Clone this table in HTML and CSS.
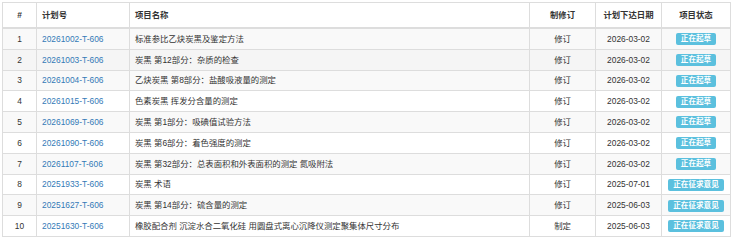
FILE: index.html
```html
<!DOCTYPE html>
<html lang="zh">
<head>
<meta charset="utf-8">
<link rel="stylesheet" href="styles.css">
</head>
<body>
<table class="plan-table">
  <colgroup>
    <col class="c-idx"><col class="c-code"><col class="c-name"><col class="c-type"><col class="c-date"><col class="c-state">
  </colgroup>
  <thead>
    <tr><th class="center">#</th><th>计划号</th><th>项目名称</th><th class="center">制修订</th><th class="center">计划下达日期</th><th class="center">项目状态</th></tr>
  </thead>
  <tbody>
    <tr><td class="center">1</td><td><a href="#">20261002-T-606</a></td><td>标准参比乙炔炭黑及鉴定方法</td><td class="center">修订</td><td class="center">2026-03-02</td><td class="center"><span class="label">正在起草</span></td></tr>
    <tr class="hover"><td class="center">2</td><td><a href="#">20261003-T-606</a></td><td>炭黑 第12部分：杂质的检查</td><td class="center">修订</td><td class="center">2026-03-02</td><td class="center"><span class="label">正在起草</span></td></tr>
    <tr><td class="center">3</td><td><a href="#">20261004-T-606</a></td><td>乙炔炭黑 第8部分：盐酸吸液量的测定</td><td class="center">修订</td><td class="center">2026-03-02</td><td class="center"><span class="label">正在起草</span></td></tr>
    <tr><td class="center">4</td><td><a href="#">20261015-T-606</a></td><td>色素炭黑 挥发分含量的测定</td><td class="center">修订</td><td class="center">2026-03-02</td><td class="center"><span class="label">正在起草</span></td></tr>
    <tr><td class="center">5</td><td><a href="#">20261069-T-606</a></td><td>炭黑 第1部分：吸碘值试验方法</td><td class="center">修订</td><td class="center">2026-03-02</td><td class="center"><span class="label">正在起草</span></td></tr>
    <tr><td class="center">6</td><td><a href="#">20261090-T-606</a></td><td>炭黑 第6部分：着色强度的测定</td><td class="center">修订</td><td class="center">2026-03-02</td><td class="center"><span class="label">正在起草</span></td></tr>
    <tr><td class="center">7</td><td><a href="#">20261107-T-606</a></td><td>炭黑 第32部分：总表面积和外表面积的测定 氮吸附法</td><td class="center">修订</td><td class="center">2026-03-02</td><td class="center"><span class="label">正在起草</span></td></tr>
    <tr><td class="center">8</td><td><a href="#">20251933-T-606</a></td><td>炭黑 术语</td><td class="center">修订</td><td class="center">2025-07-01</td><td class="center"><span class="label">正在征求意见</span></td></tr>
    <tr><td class="center">9</td><td><a href="#">20251627-T-606</a></td><td>炭黑 第14部分：硫含量的测定</td><td class="center">修订</td><td class="center">2025-06-03</td><td class="center"><span class="label">正在征求意见</span></td></tr>
    <tr><td class="center">10</td><td><a href="#">20251630-T-606</a></td><td>橡胶配合剂 沉淀水合二氧化硅 用圆盘式离心沉降仪测定聚集体尺寸分布</td><td class="center">制定</td><td class="center">2025-06-03</td><td class="center"><span class="label">正在征求意见</span></td></tr>
  </tbody>
</table>
</body>
</html>
```
FILE: styles.css
```css
html, body {
  margin: 0;
  padding: 0;
  background: #fff;
}
body {
  padding: 2px 0 0 2px;
  font-family: "Liberation Sans", "Noto Sans CJK SC", sans-serif;
  font-size: 8.4px;
  color: #333;
}
.plan-table {
  border-collapse: collapse;
  table-layout: fixed;
  width: 728px;
  border: 1px solid #ddd;
}
.c-idx { width: 34px; }
.c-code { width: 93px; }
.c-name { width: 400px; }
.c-type { width: 66px; }
.c-date { width: 66px; }
.c-state { width: 69px; }
.plan-table th,
.plan-table td {
  border: 1px solid #ddd;
  padding: 0 4px 0 5px;
  text-align: left;
  white-space: nowrap;
  overflow: hidden;
  line-height: 12px;
}
.plan-table th {
  height: 24px;
  font-weight: bold;
  border-bottom-width: 2px;
}
.plan-table td {
  height: 19.8px;
}
.plan-table .center {
  text-align: center;
  padding: 0 2px;
}
.plan-table tbody tr:nth-child(odd) {
  background: #f9f9f9;
}
.plan-table tbody tr.hover {
  background: #f5f5f5;
}
.plan-table a {
  color: #337ab7;
  text-decoration: none;
}
.label {
  display: inline-block;
  background: #5bc0de;
  color: #fff;
  font-weight: bold;
  font-size: 7.6px;
  line-height: 8px;
  padding: 2px 5px 2px;
  border-radius: 2px;
  vertical-align: middle;
}
```
